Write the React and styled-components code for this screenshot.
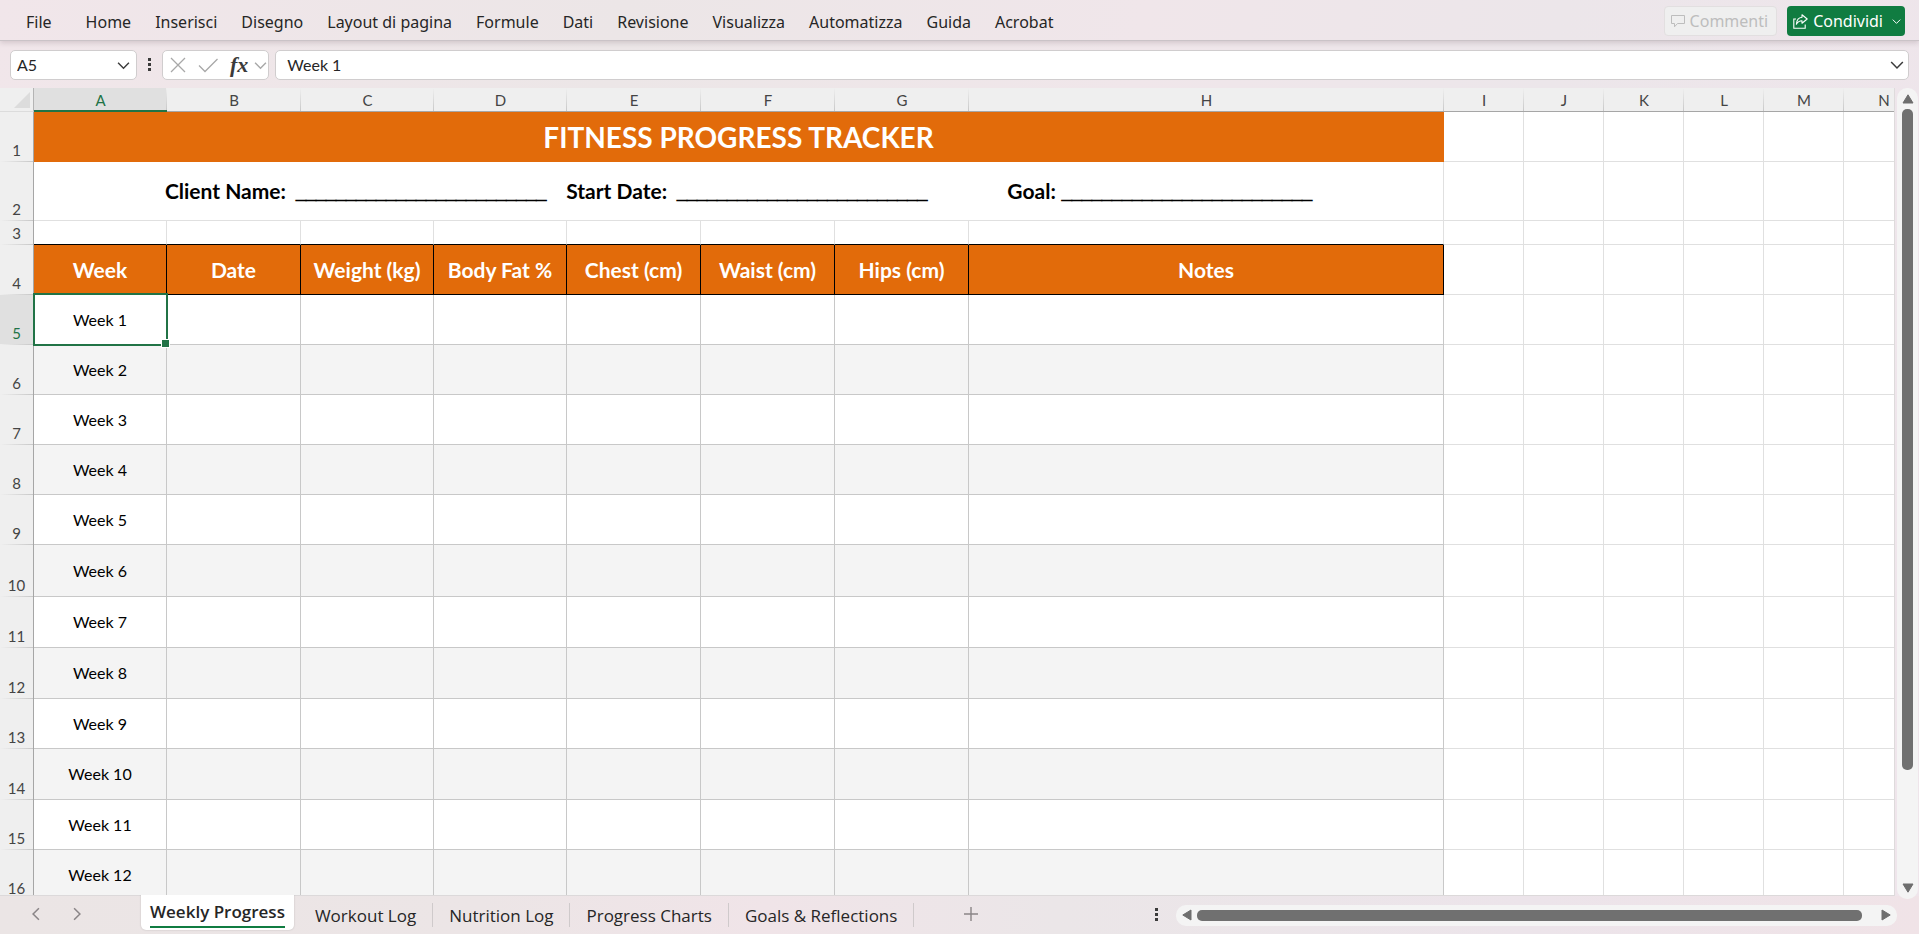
import { useState } from "react";
import styled, { createGlobalStyle, css } from "styled-components";

const menuItems = [
	"File", "Home", "Inserisci", "Disegno", "Layout di pagina", "Formule", "Dati",
	"Revisione", "Visualizza", "Automatizza", "Guida", "Acrobat",
];

const sheetNames = ["Weekly Progress", "Workout Log", "Nutrition Log", "Progress Charts", "Goals & Reflections"];

// the Notes column has no width of its own, it takes what is left
const columns = [
	{ name: "A", width: 133 },
	{ name: "B", width: 134 },
	{ name: "C", width: 133 },
	{ name: "D", width: 133 },
	{ name: "E", width: 134 },
	{ name: "F", width: 134 },
	{ name: "G", width: 134 },
	{ name: "H" },
	{ name: "I", width: 80 },
	{ name: "J", width: 80 },
	{ name: "K", width: 80 },
	{ name: "L", width: 80 },
	{ name: "M", width: 80 },
	{ name: "N", width: 80 },
];

const headings = ["Week", "Date", "Weight (kg)", "Body Fat %", "Chest (cm)", "Waist (cm)", "Hips (cm)", "Notes"];
const outside = columns.slice(headings.length);
const weekHeights = [50, 50, 50, 50, 50, 52, 51, 51, 50, 51, 50, 50];
const blank = "_".repeat(25);

const Chevron = ({ size = 12, direction = "down" }) => {
	const paths = {
		down: "M1 3.5 L6 8.5 L11 3.5",
		left: "M8.5 1 L3.5 6 L8.5 11",
		right: "M3.5 1 L8.5 6 L3.5 11",
	};
	return (
		<svg width={size} height={size} viewBox="0 0 12 12" fill="none" stroke="currentColor" strokeWidth="1.3" aria-hidden="true">
			<path d={paths[direction]} />
		</svg>
	);
};

const Arrow = ({ direction }) => {
	const paths = {
		up: "M6 1.8 L11 10 H1 Z",
		down: "M1 2 H11 L6 10.2 Z",
		left: "M1.8 6 L10 1 V11 Z",
		right: "M2 1 L10.2 6 L2 11 Z",
	};
	return (
		<svg width="12" height="12" viewBox="0 0 12 12" fill="#6e6e6e" stroke="#6e6e6e" strokeLinejoin="round" aria-hidden="true">
			<path d={paths[direction]} />
		</svg>
	);
};

const Dots = () => (
	<svg width="3" height="14" viewBox="0 0 3 14" fill="#3b3b3b" aria-hidden="true">
		<rect width="3" height="3" />
		<rect y="5" width="3" height="3" />
		<rect y="10" width="3" height="3" />
	</svg>
);

const Ribbon = () => (
	<RibbonBar>
		<Menu>
			{menuItems.map((item) => <MenuButton key={item} type="button">{item}</MenuButton>)}
		</Menu>
		<Actions>
			<CommentButton type="button" disabled>
				<svg width="14" height="14" viewBox="0 0 14 14" fill="none" stroke="currentColor" aria-hidden="true">
					<path d="M.5 1.5 H13.5 V9.5 H6.5 L3.5 12.8 V9.5 H.5 Z" />
				</svg>
				Commenti
			</CommentButton>
			<ShareButton type="button">
				<svg width="15" height="15" viewBox="0 0 15 15" fill="none" stroke="currentColor" strokeWidth="1.1" aria-hidden="true">
					<path d="M3 5 H.8 V14.2 H12.2 V10.5" />
					<path d="M9 .8 L14.2 5 L9 9.2 V6.8 C6.5 6.8 4.8 7.8 3.4 10.2 C3.7 6 5.8 3.6 9 3.3 Z" strokeLinejoin="round" />
				</svg>
				<span>Condividi</span>
				<Chevron size={9} />
			</ShareButton>
		</Actions>
	</RibbonBar>
);

const FormulaBar = ({ value, onChange }) => (
	<FormulaRow>
		<NameBox>
			<BarInput aria-label="Casella Nome" defaultValue="A5" />
			<IconButton type="button" aria-label="Apri elenco nomi"><Chevron size={13} /></IconButton>
		</NameBox>
		<Dots />
		<FunctionBox>
			<IconButton type="button" aria-label="Annulla" $muted>
				<svg width="16" height="16" viewBox="0 0 16 16" fill="none" stroke="currentColor" strokeWidth="1.3">
					<path d="M1 1 L15 15 M15 1 L1 15" />
				</svg>
			</IconButton>
			<IconButton type="button" aria-label="Invio" $muted>
				<svg width="20" height="16" viewBox="0 0 20 16" fill="none" stroke="currentColor" strokeWidth="1.3">
					<path d="M1 8.5 L7 14.5 L19.5 2" />
				</svg>
			</IconButton>
			<FxGroup>
				<FxButton type="button">fx</FxButton>
				<IconButton type="button" aria-label="Funzioni recenti" $muted><Chevron size={13} /></IconButton>
			</FxGroup>
		</FunctionBox>
		<FormulaBox>
			<BarInput aria-label="Barra della formula" value={value} onChange={(e) => onChange(e.target.value)} />
			<IconButton type="button" aria-label="Espandi"><Chevron size={14} /></IconButton>
		</FormulaBox>
	</FormulaRow>
);

const OutsideCells = () => outside.map((col) => <Cell key={col.name} />);

const Sheet = ({ firstWeek }) => (
	<Grid>
		<colgroup>
			<Col $w={34} />
			{columns.map((col) => <Col key={col.name} $w={col.width} />)}
		</colgroup>
		<thead>
			<tr>
				<Corner>
					<svg width="16" height="16" viewBox="0 0 16 16" fill="#dcdcdc" aria-hidden="true">
						<path d="M16 0 V16 H0 Z" />
					</svg>
				</Corner>
				{columns.map((col, i) => (
					<ColumnHead key={col.name} scope="col" $active={i === 0}>{col.name}</ColumnHead>
				))}
			</tr>
		</thead>
		<tbody>
			<Row $h={50}>
				<RowHead scope="row">1</RowHead>
				<TitleCell colSpan={headings.length}>FITNESS PROGRESS TRACKER</TitleCell>
				<OutsideCells />
			</Row>
			<Row $h={59}>
				<RowHead scope="row">2</RowHead>
				<Cell colSpan={headings.length}>
					<ClientLine>
						<Field>Client Name: <Blank>{blank}</Blank></Field>
						<Field>Start Date: <Blank>{blank}</Blank></Field>
						<Field $apart>Goal: <Blank>{blank}</Blank></Field>
					</ClientLine>
				</Cell>
				<OutsideCells />
			</Row>
			<Row $h={24}>
				<RowHead scope="row">3</RowHead>
				{headings.map((name) => <Cell key={name} $underline="#000000" />)}
				<OutsideCells />
			</Row>
			<Row $h={50}>
				<RowHead scope="row">4</RowHead>
				{headings.map((name) => <HeadingCell key={name}>{name}</HeadingCell>)}
				<OutsideCells />
			</Row>
			{weekHeights.map((height, i) => (
				<Row key={i} $h={height}>
					<RowHead scope="row" $active={i === 0}>{i + 5}</RowHead>
					{headings.map((name, c) => (
						<WeekCell key={name} $shaded={i % 2 === 1}>
							{c === 0 && (i === 0 ? firstWeek : `Week ${i + 1}`)}
							{c === 0 && i === 0 && <Selection />}
						</WeekCell>
					))}
					<OutsideCells />
				</Row>
			))}
		</tbody>
	</Grid>
);

export default function App() {
	const [sheet, setSheet] = useState(sheetNames[0]);
	const [formula, setFormula] = useState("Week 1");

	return (
		<Window>
			<GlobalStyle />
			<Ribbon />
			<FormulaBar value={formula} onChange={setFormula} />
			<Workspace>
				<SheetView>
					<Sheet firstWeek={formula} />
				</SheetView>
				<VerticalScroll>
					<ScrollButton type="button" aria-label="Scorri su"><Arrow direction="up" /></ScrollButton>
					<VerticalTrack><VerticalThumb /></VerticalTrack>
					<ScrollButton type="button" aria-label="Scorri giù"><Arrow direction="down" /></ScrollButton>
				</VerticalScroll>
			</Workspace>
			<BottomBar>
				<SheetNav>
					<IconButton type="button" aria-label="Foglio precedente" $dim><Chevron size={14} direction="left" /></IconButton>
					<IconButton type="button" aria-label="Foglio successivo" $dim><Chevron size={14} direction="right" /></IconButton>
				</SheetNav>
				<Tabs>
					{sheetNames.map((name) => (
						<Tab key={name} type="button" $active={name === sheet} onClick={() => setSheet(name)}>
							<span>{name}</span>
						</Tab>
					))}
				</Tabs>
				<AddButton type="button" aria-label="Nuovo foglio">
					<svg width="16" height="16" viewBox="0 0 16 16" fill="none" stroke="currentColor" strokeWidth="1.4">
						<path d="M8 1 V15 M1 8 H15" />
					</svg>
				</AddButton>
				<Dots />
				<HorizontalScroll>
					<ScrollButton type="button" aria-label="Scorri a sinistra"><Arrow direction="left" /></ScrollButton>
					<HorizontalTrack><HorizontalThumb /></HorizontalTrack>
					<ScrollButton type="button" aria-label="Scorri a destra"><Arrow direction="right" /></ScrollButton>
				</HorizontalScroll>
			</BottomBar>
		</Window>
	);
}

const GlobalStyle = createGlobalStyle`
	* {
		box-sizing: border-box;
	}
	body {
		margin: 0;
	}
	button, input {
		font: inherit;
		color: inherit;
		border: 0;
		padding: 0;
		background: none;
	}
	svg {
		display: block;
		flex: none;
	}
`;

const uiFont = `"Noto Sans", "Open Sans", sans-serif`;
const tabFont = `"Open Sans", "Noto Sans", sans-serif`;
const cellFont = `Lato, "Open Sans", sans-serif`;

const Window = styled.div`
	display: flex;
	flex-direction: column;
	height: 100vh;
	overflow: hidden;
	font-family: ${uiFont};
	font-size: 16px;
	color: #262626;
	background: linear-gradient(100deg, #f1e6ea 0%, #ece6e7 30%, #f0e6ea 55%, #ece6ea 75%, #efe5eb 100%);
`;

const RibbonBar = styled.header`
	display: flex;
	flex: none;
	justify-content: space-between;
	align-items: center;
	height: 41px;
	padding: 0 14px;
	border-bottom: 1px solid #cac3c7;
	box-shadow: 0 2px 5px rgba(60, 40, 50, 0.16);
`;

const Menu = styled.nav`
	display: flex;
	align-items: center;
`;

const MenuButton = styled.button`
	padding: 4px 12px 0;
	line-height: 24px;
	white-space: nowrap;
	&:first-child {
		margin-right: 10px;
	}
`;

const Actions = styled.div`
	display: flex;
	gap: 10px;
	padding-top: 2px;
`;

const ActionButton = styled.button`
	display: flex;
	align-items: center;
	gap: 5px;
	height: 30px;
	border-radius: 4px;
	line-height: 24px;
`;

const CommentButton = styled(ActionButton)`
	padding: 0 8px 0 6px;
	border: 1px solid #e2dfe0;
	background: #efefef;
	color: #bdbdbd;
`;

const ShareButton = styled(ActionButton)`
	padding: 0 4px 0 6px;
	background: #107c41;
	color: #ffffff;
	span {
		margin-right: 4px;
	}
`;

const FormulaRow = styled.div`
	display: flex;
	flex: none;
	align-items: center;
	height: 47px;
	padding: 1px 10px 0;
`;

const BarBox = styled.div`
	display: flex;
	align-items: center;
	height: 30px;
	border: 1px solid #d0cdce;
	border-radius: 5px;
	background: #ffffff;
`;

const NameBox = styled(BarBox)`
	width: 127px;
	margin-right: 11px;
	padding: 0 6px;
`;

const FunctionBox = styled(BarBox)`
	gap: 12px;
	margin: 0 6px 0 11px;
	padding: 0 1px 0 7px;
`;

const FxGroup = styled.div`
	display: flex;
	align-items: center;
	gap: 6px;
`;

const FormulaBox = styled(BarBox)`
	flex: 1;
	padding: 0 4px 0 11px;
`;

const BarInput = styled.input`
	flex: 1;
	min-width: 0;
	padding-bottom: 2px;
	font-family: ${cellFont};
	font-size: 16px;
	outline: none;
`;

const IconButton = styled.button`
	display: flex;
	color: ${(props) => (props.$muted ? "#a8a8a8" : props.$dim ? "#8a8587" : "#3b3b3b")};
`;

const FxButton = styled.button`
	font-family: "Liberation Serif", serif;
	font-size: 22px;
	font-style: italic;
	font-weight: 700;
	line-height: 26px;
	color: #3b3b3b;
`;

const Workspace = styled.main`
	display: flex;
	flex: 1;
	min-height: 0;
	gap: 2px;
	padding-right: 1px;
`;

const SheetView = styled.div`
	flex: 1;
	min-width: 0;
	overflow: hidden;
	border-right: 1px solid #dedbdc;
	border-bottom: 1px solid #dcd9da;
	background: #ffffff;
`;

// a little wider than the view, so the last column runs out of sight
const Grid = styled.table`
	width: calc(100% + 30px);
	table-layout: fixed;
	border-collapse: separate;
	border-spacing: 0;
	font-family: ${cellFont};
	font-size: 15px;
	line-height: 20px;
	color: #000000;
`;

const Col = styled.col`
	width: ${(props) => (props.$w ? `${props.$w}px` : "auto")};
`;

const Row = styled.tr`
	height: ${(props) => props.$h}px;
`;

const Corner = styled.td`
	height: 24px;
	padding: 0 3px 3px 14px;
	border-right: 1px solid #b4b4b4;
	border-bottom: 1px solid #dcdcdc;
	background: #efefef;
	vertical-align: bottom;
`;

const activeHead = css`
	color: #217346;
	background-color: #e0e0e0;
`;

const ColumnHead = styled.th`
	height: 24px;
	padding: ${(props) => (props.$active ? "2px 0 0" : "1px 0 0")};
	border-bottom: ${(props) => (props.$active ? "2px solid #217346" : "1px solid #a6a6a6")};
	font-weight: 400;
	line-height: 20px;
	color: #444444;
	background: linear-gradient(#efefef, #c8c8c8) right / 1px 100% no-repeat #efefef;
	${(props) => props.$active && activeHead}
`;

const RowHead = styled.th`
	padding: 0 0 2px;
	border-right: 1px solid #a6a6a6;
	font-weight: 400;
	text-align: center;
	vertical-align: bottom;
	color: #444444;
	background: linear-gradient(90deg, #efefef, #c8c8c8) bottom / 100% 1px no-repeat #efefef;
	${(props) => props.$active && activeHead}
`;

const Cell = styled.td`
	padding: 0;
	border-right: 1px solid #e0e0e0;
	border-bottom: 1px solid ${(props) => props.$underline || "#e0e0e0"};
	text-align: center;
	vertical-align: middle;
	white-space: nowrap;
`;

const TitleCell = styled(Cell)`
	border-color: #e26b0a;
	background: #e26b0a;
	color: #ffffff;
	font-size: 28px;
	font-weight: 700;
	line-height: 36px;
`;

const ClientLine = styled.div`
	display: flex;
	justify-content: center;
	gap: 20px;
	padding-top: 2px;
	font-size: 21px;
	font-weight: 700;
	line-height: 24px;
`;

const Field = styled.div`
	display: flex;
	align-items: baseline;
	gap: ${(props) => (props.$apart ? "6px" : "10px")};
	margin-left: ${(props) => (props.$apart ? "60px" : "0")};
`;

// the stroke thickens the rule that the underscores make
const Blank = styled.span`
	font-family: "Liberation Sans", Arial, sans-serif;
	font-size: 18px;
	-webkit-text-stroke: 1px #000000;
`;

const HeadingCell = styled(Cell)`
	border-color: #000000;
	background: #e26b0a;
	color: #ffffff;
	font-size: 21px;
	font-weight: 700;
	line-height: 24px;
`;

const WeekCell = styled(Cell)`
	position: relative;
	border-color: #c8c8c8;
	background: ${(props) => (props.$shaded ? "#f4f4f4" : "#ffffff")};
	font-size: 16px;
`;

const Selection = styled.div`
	position: absolute;
	inset: -2px -2px -2px -1px;
	z-index: 1;
	border: 2px solid #217346;
	pointer-events: none;
	&::after {
		content: "";
		position: absolute;
		right: -4px;
		bottom: -4px;
		width: 7px;
		height: 7px;
		border: 1px solid #ffffff;
		background: #217346;
	}
`;

const VerticalScroll = styled.div`
	position: relative;
	display: flex;
	flex-direction: column;
	align-items: center;
	width: 21px;
	margin-bottom: -3px;
	padding: 5px 0;
	border-radius: 10px;
	background: #f4f4f4;
`;

const ScrollButton = styled.button`
	flex: none;
`;

const VerticalTrack = styled.div`
	flex: 1;
	width: 11px;
	margin: 4px 0;
`;

const VerticalThumb = styled.div`
	height: 86%;
	border-radius: 5px;
	background: #707070;
`;

const BottomBar = styled.footer`
	display: flex;
	flex: none;
	align-items: center;
	height: 38px;
	padding-right: 22px;
	background: linear-gradient(90deg, #ebe5e5 0%, #ece5e6 25%, #f0e4e8 40%, #ebe6e8 55%, #ece4ea 80%, #f0e3e7 100%);
`;

const SheetNav = styled.div`
	display: flex;
	gap: 27px;
	width: 141px;
	padding: 0 0 2px 29px;
`;

const Tabs = styled.div`
	display: flex;
	align-self: stretch;
	align-items: center;
	font-family: ${tabFont};
	font-size: 17px;
`;

const Tab = styled.button`
	height: 24px;
	padding: 2px 16px 0;
	border-right: 1px solid #cfcacb;
	line-height: 22px;
	white-space: nowrap;
	${(props) => props.$active && css`
		align-self: flex-start;
		height: 35px;
		margin: -1px 5px 0 0;
		padding: 2px 9px 0;
		border: 0;
		border-radius: 0 0 5px 5px;
		background: #ffffff;
		box-shadow: 0 0 2px rgba(0, 0, 0, 0.2);
		clip-path: inset(0 -3px -3px -3px);
		font-weight: 600;
		span {
			display: block;
			padding-bottom: 2px;
			line-height: 24px;
			border-bottom: 2px solid #107c41;
		}
	`}
`;

const AddButton = styled.button`
	margin: 0 auto 3px 49px;
	color: #8a8587;
`;

const HorizontalScroll = styled.div`
	display: flex;
	flex: 0 0 38%;
	align-items: center;
	height: 21px;
	margin-left: 18px;
	padding: 0 5px;
	border-radius: 10px;
	background: #f4f4f4;
`;

const HorizontalTrack = styled.div`
	flex: 1;
	margin: 0 4px;
`;

const HorizontalThumb = styled.div`
	width: 98%;
	height: 11px;
	border-radius: 5px;
	background: #707070;
`;
